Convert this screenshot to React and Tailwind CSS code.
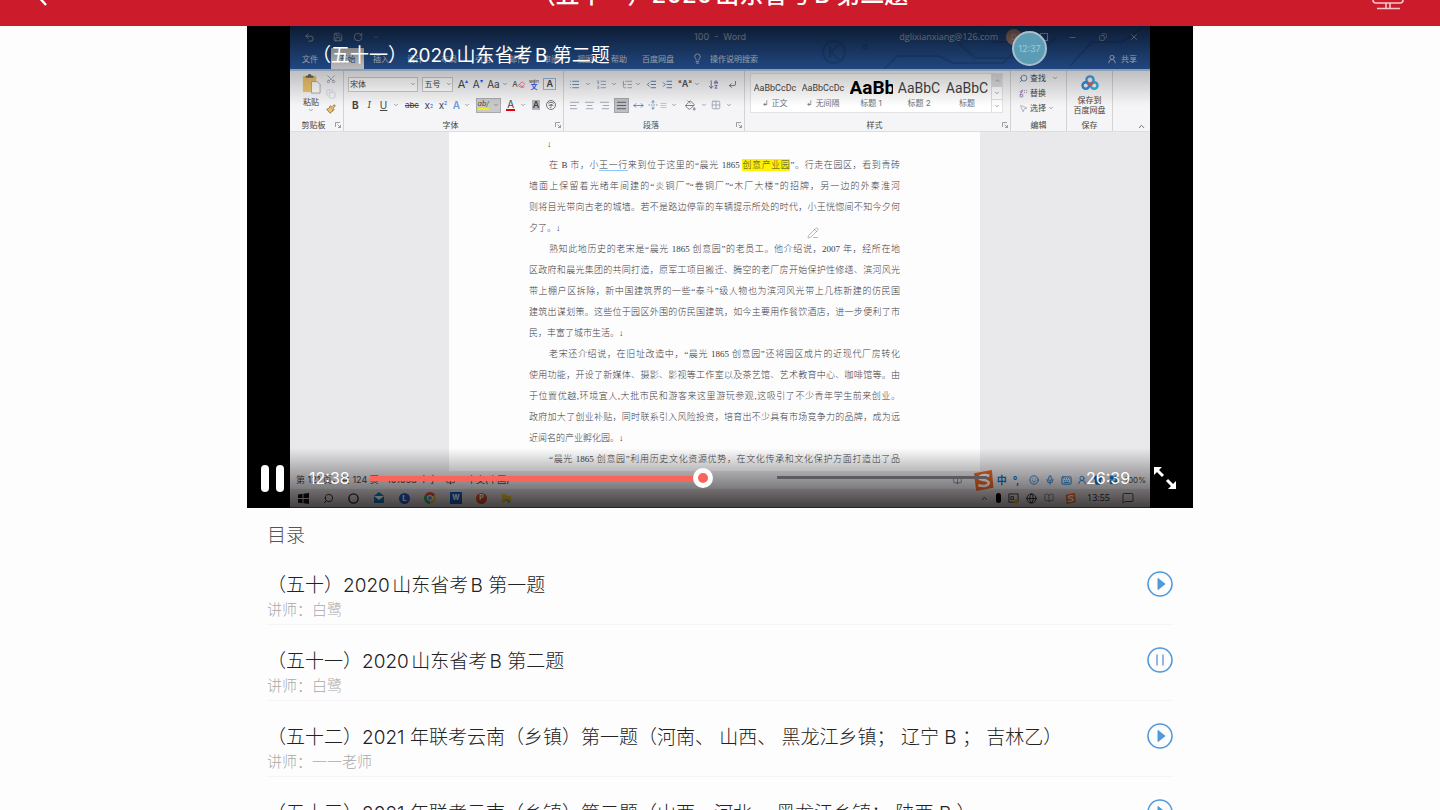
import { useState } from "react";
import {
  Undo2, Save, RotateCw, ChevronDown, ChevronUp, Lightbulb, UserRound, Minus, X, Copy, Scissors,
  Paintbrush, Eraser, List, ListOrdered, ListTree, IndentDecrease, IndentIncrease, ArrowDownAZ,
  CornerDownLeft, AlignLeft, AlignCenter, AlignRight, AlignJustify, PaintBucket, Grid2x2, Search,
  MousePointer2, Replace, Mic, Keyboard, Smile, Shirt, LayoutGrid, Globe, MessageSquare, Circle,
  UnfoldVertical, MoveHorizontal, BookOpen, PencilLine,
} from "lucide-react";

const lessons = [
  { title: "（五十）2020山东省考B 第一题", teacher: "白鹭" },
  { title: "（五十一）2020山东省考B 第二题", teacher: "白鹭" },
  { title: "（五十二）2021 年联考云南（乡镇）第一题（河南、 山西、 黑龙江乡镇； 辽宁 B ； 吉林乙）", teacher: "一一老师" },
  { title: "（五十三）2021 年联考云南（乡镇）第二题（山西、河北、 黑龙江乡镇； 陕西 B ）", teacher: "一一老师" },
];

const tabs = ["插入", "设计", "布局", "引用", "邮件", "审阅", "视图", "帮助"];

const paragraphs = [
  [
    <>在 B 市，小<u className="decoration-blue-300 underline-offset-2">王一行</u>来到位于这里的“晨光 1865 <mark className="bg-[#fff200] text-inherit py-[1px]">创意产业园</mark>”。行走在园区，看到青砖</>,
    "墙面上保留着光绪年间建的“炎铜厂”“卷铜厂”“木厂大楼”的招牌，另一边的外秦淮河",
    "则将目光带向古老的城墙。若不是路边停靠的车辆提示所处的时代，小王恍惚间不知今夕何",
    "夕了。↓",
  ],
  [
    "熟知此地历史的老宋是“晨光 1865 创意园”的老员工。他介绍说，2007 年，经所在地",
    "区政府和晨光集团的共同打造，原军工项目搬迁、腾空的老厂房开始保护性修缮、滨河风光",
    "带上棚户区拆除，新中国建筑界的一些“泰斗”级人物也为滨河风光带上几栋新建的仿民国",
    "建筑出谋划策。这些位于园区外围的仿民国建筑，如今主要用作餐饮酒店，进一步便利了市",
    "民，丰富了城市生活。↓",
  ],
  [
    "老宋还介绍说，在旧址改造中，“晨光 1865 创意园”还将园区成片的近现代厂房转化",
    "使用功能，开设了新媒体、摄影、影视等工作室以及茶艺馆、艺术教育中心、咖啡馆等。由",
    "于位置优越,环境宜人,大批市民和游客来这里游玩参观,这吸引了不少青年学生前来创业。",
    "政府加大了创业补贴，同时联系引入风险投资，培育出不少具有市场竞争力的品牌，成为远",
    "近闻名的产业孵化园。↓",
  ],
];

const styleSamples = [
  { sample: "AaBbCcDc", name: "↲ 正文", cls: "text-[9px]" },
  { sample: "AaBbCcDc", name: "↲ 无间隔", cls: "text-[9px]" },
  { sample: "AaBb", name: "标题 1", cls: "text-[19px] font-bold text-black" },
  { sample: "AaBbC", name: "标题 2", cls: "text-[14px]" },
  { sample: "AaBbC", name: "标题", cls: "text-[14px]" },
];

function Caret() {
  return <ChevronDown className="size-[6px] shrink-0 text-gray-600" />;
}

function Tool({ label, className = "", children }) {
  return (
    <button type="button" aria-label={label} className={`flex h-[15px] shrink-0 items-center justify-center ${className}`}>
      {children}
    </button>
  );
}

function Group({ label, className, launcher = true, children }) {
  return (
    <div className={`flex shrink-0 flex-col border-r border-[#d3d2d5] ${className}`}>
      <div className="min-h-0 flex-1">{children}</div>
      <div className="flex h-3 items-center px-[2px]">
        <span className="flex-1 text-center">{label}</span>
        {launcher && (
          <svg viewBox="0 0 6 6" className="size-[6px]" fill="none" stroke="#888" strokeWidth="0.8">
            <path d="M.5 5V.5H5M2.5 2.5l3 3M5.5 3v2.5H3" />
          </svg>
        )}
      </div>
    </div>
  );
}

function WordHeader() {
  return (
    <div className="relative h-[43px] overflow-hidden bg-[#2a5ba4] text-[8px] text-[#dfe6f1]">
      <svg className="absolute right-0 top-0 h-[43px] w-[400px]" viewBox="0 0 400 43" fill="none" stroke="#22508f" strokeWidth="2">
        <circle cx="84" cy="26" r="11" />
        <path d="M89 19l-8 7 8 8M80 20v12" />
        <circle cx="115" cy="21" r="2" />
        <path d="M134 43l13-13h42l14 7h50l14-14M203 12l22 20h60l20-20M320 40l22-24h30l20-14M230 4l14 12h40" />
      </svg>
      <div className="relative grid h-[22px] grid-cols-[1fr_auto_1fr] items-center">
        <div className="flex items-center gap-[6px] pl-[14px]">
          <Undo2 className="size-[11px]" />
          <Caret />
          <Save className="size-[10px]" />
          <RotateCw className="ml-1 size-[10px]" />
          <ChevronDown className="ml-1 size-[6px]" />
        </div>
        <span className="whitespace-pre text-[9px]">100  -  Word</span>
        <div className="flex items-center justify-end pr-[11px]">
          <span className="mr-2 font-['Open_Sans',sans-serif] text-[9px]">dglixianxiang@126.com</span>
          <span className="mr-[18px] flex size-4 items-center justify-center rounded-full bg-[#d9a398]">D</span>
          <span className="mr-5 size-2 border border-current" />
          <Minus className="mr-[22px] size-[9px]" />
          <Copy className="mr-[22px] size-2 -scale-x-100" />
          <X className="size-[10px]" />
        </div>
      </div>
      <div className="relative flex h-[21px] items-center">
        <span className="w-[41px] pl-3">文件</span>
        <span className="flex h-full w-[33px] items-center justify-center bg-[#f3f2f4] text-[#2a5ba4]">开始</span>
        {tabs.map((tab) => (
          <span key={tab} className="w-[34px] text-center">{tab}</span>
        ))}
        <span className="ml-[6px]">百度网盘</span>
        <Lightbulb className="ml-[18px] size-[11px]" />
        <span className="ml-[7px]">操作说明搜索</span>
        <UserRound className="ml-auto size-[10px]" />
        <span className="ml-1 mr-[13px]">共享</span>
      </div>
    </div>
  );
}

function FontGroup() {
  return (
    <Group label="字体" className="w-[220px]">
      <div className="flex h-[26px] items-center justify-between pl-1 pr-[7px]">
        <label className="relative flex w-[70px] items-center">
          <select aria-label="字体" className="h-[15px] w-full appearance-none border border-[#c9c8cb] bg-white px-[1px] text-[8px]">
            <option>宋体</option>
          </select>
          <span className="absolute right-[2px]"><Caret /></span>
        </label>
        <label className="relative flex w-[31px] items-center">
          <select aria-label="字号" className="h-[15px] w-full appearance-none border border-[#c9c8cb] bg-white px-[1px] text-[8px]">
            <option>五号</option>
          </select>
          <span className="absolute right-[1px]"><Caret /></span>
        </label>
        <Tool label="增大字号"><span className="text-[11px]">A</span><sup className="text-[6px] text-blue-600">▴</sup></Tool>
        <Tool label="减小字号"><span className="text-[10px]">A</span><sup className="text-[6px] text-blue-600">▾</sup></Tool>
        <Tool label="更改大小写" className="gap-[2px] text-[10px]">Aa<Caret /></Tool>
        <Tool label="清除格式">
          <span className="text-[8px]">A</span><Eraser className="size-[7px] text-rose-500" />
        </Tool>
        <Tool label="拼音指南">
          <span className="flex flex-col text-[7px] leading-[6px]"><i className="text-[5px] not-italic">wén</i><b className="text-blue-600">文</b></span>
        </Tool>
        <Tool label="字符边框"><span className="border border-[#9cb7d4] px-[2px] text-[9px] font-semibold leading-[10px]">A</span></Tool>
      </div>
      <div className="flex h-[16px] items-center justify-between pl-2 pr-[7px] text-[10px]">
        <Tool label="加粗" className="font-bold">B</Tool>
        <Tool label="倾斜" className="w-[10px] font-serif italic">I</Tool>
        <Tool label="下划线" className="gap-[6px]"><span className="underline">U</span><Caret /></Tool>
        <Tool label="删除线" className="text-[8px] line-through">abc</Tool>
        <Tool label="下标">x<sub className="text-[5px] text-blue-600">2</sub></Tool>
        <Tool label="上标">x<sup className="text-[5px] text-blue-600">2</sup></Tool>
        <Tool label="文本效果" className="gap-1 font-semibold text-[#6ea0d8]">A<Caret /></Tool>
        <Tool label="突出显示" className="w-[25px] gap-1 border border-[#a9a8ab] bg-[#c9c8ca]">
          <span className="border-b-2 border-[#f2ee1a] text-[7px] italic leading-[8px]">ab/</span><Caret />
        </Tool>
        <Tool label="字体颜色" className="gap-[5px]"><span className="border-b-2 border-red-600 px-[1px] leading-[9px]">A</span><Caret /></Tool>
        <Tool label="字符底纹"><span className="bg-[#b5b4b7] px-[1px] text-[9px] font-semibold leading-[10px]">A</span></Tool>
        <Tool label="带圈字符"><span className="flex size-[10px] items-center justify-center rounded-full border border-gray-500 text-[6px]">字</span></Tool>
      </div>
    </Group>
  );
}

function ParagraphGroup() {
  return (
    <Group label="段落" className="w-[181px] text-gray-600">
      <div className="flex h-[26px] items-center gap-[5px] pl-[5px]">
        <Tool label="项目符号" className="gap-[5px]"><List className="size-[11px] text-[#5f84b4]" /><Caret /></Tool>
        <Tool label="编号" className="gap-[4px]"><ListOrdered className="size-[11px] text-[#8aa0bf]" /><Caret /></Tool>
        <Tool label="多级列表" className="gap-[2px]"><ListTree className="size-[11px] text-gray-400" /><Caret /></Tool>
        <Tool label="减少缩进"><IndentDecrease className="size-[11px] text-[#4f78ab]" /></Tool>
        <Tool label="增加缩进"><IndentIncrease className="size-[11px] text-[#4f78ab]" /></Tool>
        <Tool label="中文版式" className="gap-[2px]"><span className="text-[9px] font-semibold">ˣAˣ</span><Caret /></Tool>
        <Tool label="排序" className="ml-[3px]"><ArrowDownAZ className="size-[11px] text-[#7165a8]" /></Tool>
        <Tool label="显示编辑标记" className="ml-1"><CornerDownLeft className="size-[9px]" /></Tool>
      </div>
      <div className="flex h-[16px] items-center gap-1 pl-[5px]">
        <Tool label="左对齐"><AlignLeft className="size-[11px] text-gray-400" /></Tool>
        <Tool label="居中"><AlignCenter className="size-[11px] text-gray-400" /></Tool>
        <Tool label="右对齐"><AlignRight className="size-[11px] text-gray-400" /></Tool>
        <Tool label="两端对齐" className="w-[15px] border border-[#a5a4a7] bg-[#bfbec1]"><AlignJustify className="size-[11px]" /></Tool>
        <Tool label="分散对齐"><MoveHorizontal className="size-[11px] text-[#4f8ac4]" /></Tool>
        <Tool label="行距" className="gap-[2px]"><UnfoldVertical className="size-[10px] text-[#4f8ac4]" /><AlignJustify className="size-[7px] text-gray-400" /></Tool>
        <Caret />
        <Tool label="底纹" className="ml-1 gap-[5px]"><PaintBucket className="size-[11px] text-gray-500" /><Caret /></Tool>
        <Tool label="边框" className="gap-[5px]"><Grid2x2 className="size-[10px] text-gray-400" /><Caret /></Tool>
      </div>
    </Group>
  );
}

function Ribbon() {
  return (
    <div className="flex h-[63px] overflow-hidden border-b border-t-2 border-b-[#dddcdf] border-t-[#b9cdea] bg-[#f5f4f6] text-[8px] leading-[10px] text-[#444]">
      <Group label="剪贴板" className="w-[54px]">
        <div className="flex justify-between pl-[11px] pr-[7px] pt-[2px]">
          <button type="button" className="flex w-5 flex-col items-center">
            <svg viewBox="0 0 20 22" className="size-[21px]">
              <rect x="1" y="3" width="14" height="17" fill="#efc36c" />
              <path d="M4 5V3h2a2 2 0 0 1 4 0h2v2z" fill="#666" />
              <path d="M10 9h6l3 3v9h-9z" fill="#fff" stroke="#aaa" />
            </svg>
            <span className="mt-1 whitespace-nowrap leading-[9px]">粘贴</span>
            <Caret />
          </button>
          <div className="flex flex-col gap-[5px] pt-[1px]">
            <Scissors className="size-[10px] -rotate-90 text-gray-400" />
            <Copy className="size-[10px] text-gray-300" />
            <Paintbrush className="size-[10px] fill-[#efc36c] text-[#8a6d3d]" />
          </div>
        </div>
      </Group>
      <FontGroup />
      <ParagraphGroup />
      <Group label="样式" className="w-[266px]">
        <div className="ml-[5px] mr-[7px] mt-[2px] flex h-10 border border-[#e2e1e4] bg-white">
          {styleSamples.map((style, i) => (
            <button type="button" key={i} className="flex w-12 shrink-0 flex-col items-center pt-[3px]">
              <span className={`h-[21px] w-[43px] overflow-hidden whitespace-nowrap font-[Roboto,sans-serif] leading-[22px] ${style.cls}`}>{style.sample}</span>
              <span className="whitespace-nowrap text-gray-500">{style.name}</span>
            </button>
          ))}
          <div className="flex flex-1 flex-col divide-y divide-[#dddce0] border-l border-[#dddce0]">
            <span className="flex flex-1 items-center justify-center bg-[#dcdbde]"><ChevronUp className="size-[5px]" /></span>
            <span className="flex flex-1 items-center justify-center"><Caret /></span>
            <span className="flex flex-1 items-center justify-center"><Caret /></span>
          </div>
        </div>
      </Group>
      <Group label="编辑" className="w-[56px]" launcher={false}>
        <div className="flex flex-col gap-[5px] pl-2 pt-[2px]">
          <button type="button" className="flex items-center gap-[2px]"><Search className="size-[9px] -scale-x-100 text-[#3d6ea8]" />查找<span className="ml-1"><Caret /></span></button>
          <button type="button" className="flex items-center gap-[2px]"><Replace className="size-[9px] text-[#8064a2]" />替换</button>
          <button type="button" className="flex items-center gap-[2px]"><MousePointer2 className="size-[9px] text-gray-400" />选择<Caret /></button>
        </div>
      </Group>
      <Group label="保存" className="w-[46px]" launcher={false}>
        <button type="button" className="flex w-full flex-col items-center whitespace-nowrap pt-1">
          <svg viewBox="0 0 18 15" className="mb-[5px] h-[15px] w-[18px]" fill="none" strokeWidth="2.4">
            <circle cx="9" cy="5" r="3.6" stroke="#3aa7e0" />
            <circle cx="4.8" cy="10.5" r="3.3" stroke="#2f8fe0" />
            <circle cx="13.2" cy="10.5" r="3.3" stroke="#35b2dd" />
            <path d="M6 7.5l3 2.5 3-2.5" stroke="#e85a5e" />
          </svg>
          <span>保存到</span>
          <span>百度网盘</span>
        </button>
      </Group>
      <ChevronUp className="ml-auto mr-1 size-[9px] self-end" />
    </div>
  );
}

function Document() {
  return (
    <div className="bg-[#e9e8eb]">
      <div className="ml-[159px] mr-[170px] bg-[#fefdfe] px-[80px] pb-[1px] pt-[2px] font-['Liberation_Serif','Noto_Sans_CJK_SC',serif] text-[9px] font-light leading-[21px] text-[#3c3c3e]">
        <p className="pl-[18px]">↓</p>
        {paragraphs.map((lines, i) => (
          <div key={i}>
            {lines.map((line, j) => (
              <p key={j} className={`whitespace-nowrap ${j === 0 ? "pl-5" : ""} ${j < lines.length - 1 ? "[text-align-last:justify]" : ""}`}>
                {line}
              </p>
            ))}
          </div>
        ))}
        <p className="whitespace-nowrap pl-5 [text-align-last:justify]">
          “晨光 1865 创意园”利用历史文化资源优势，在文化传承和文化保护方面打造出了品
        </p>
      </div>
    </div>
  );
}

function SogouLogo({ className }) {
  return (
    <svg viewBox="0 0 20 20" className={className}>
      <path d="M1 3L18 0l1.500 17L3 20z" fill="#f26722" />
      <path d="M15.500 5.500C10 4 5.500 5.500 6 8c.5 2 8.500 1 9 4 .3 3-5 4-10 2.500" fill="none" stroke="#fff" strokeWidth="2.400" />
    </svg>
  );
}

function StatusBar() {
  return (
    <div className="flex h-[18px] items-center whitespace-nowrap bg-[#eceaed] pl-[6px] text-[9px] text-[#444]">
      <span className="w-[91px]">第 121 页，共 124 页</span>
      <span className="w-[59px]">101093 个字</span>
      <BookOpen className="mr-3 size-[9px]" />
      <span>中文(中国)</span>
      <BookOpen className="ml-auto mr-[11px] size-[9px] text-gray-500" />
      <div className="grid grid-cols-[24px_repeat(8,16px)] items-center text-[#0d74d1]">
        <SogouLogo className="size-[21px]" />
        <b className="text-[10px]">中</b>
        <b className="text-[10px]">°,</b>
        <Smile className="size-[10px]" />
        <Mic className="size-[10px]" />
        <Keyboard className="size-[11px]" />
        <UserRound className="size-[10px]" />
        <Shirt className="size-[10px] fill-current" />
        <LayoutGrid className="size-[10px] fill-current" />
      </div>
      <span className="mr-1 text-[8px]">100%</span>
    </div>
  );
}

function Taskbar() {
  return (
    <div className="flex h-[19px] items-center border-b border-[#777] bg-[#dcd2d7] pl-2 text-[9px] text-[#222]">
      <div className="flex items-center gap-[14px]">
        <svg viewBox="0 0 12 12" className="size-[11px]"><path d="M0 1.500l5-.7v4.700H0zM6 .7L12 0v5.500H6zM0 6.500h5v4.700l-5-.7zM6 6.500h6V12l-6-.8z" fill="#111" /></svg>
        <Search className="size-[11px] -scale-x-100" />
        <Circle className="size-[11px]" strokeWidth={3} />
        <svg viewBox="0 0 12 12" className="size-3"><path d="M1 4l5-4 5 4v7H1z" fill="#1279b8" /><path d="M1 4h10L6 8z" fill="#fff" /></svg>
        <span className="flex size-[11px] items-center justify-center rounded-full bg-[#2557c7] text-[8px] font-bold text-white">L</span>
        <svg viewBox="0 0 12 12" className="size-3">
          <path d="M6 6L.8 3A6 6 0 0 1 11.200 3z" fill="#e14a41" />
          <path d="M6 6l5.200-3A6 6 0 0 1 6 12z" fill="#edc22e" />
          <path d="M6 6v6A6 6 0 0 1 .8 3z" fill="#3aa757" />
          <circle cx="6" cy="6" r="2.500" fill="#5b8dee" stroke="#fff" />
        </svg>
        <span className="flex size-3 items-center justify-center bg-[#185abd] text-[7px] font-bold text-white">W</span>
        <span className="flex size-[11px] items-center justify-center rounded-full bg-[#d14b27] text-[7px] font-bold text-white">P</span>
        <svg viewBox="0 0 12 12" className="size-[11px]"><path d="M1 1h4l1 2h5v8H8V8H4v3H1z" fill="#e7b936" /><path d="M4 8h4v3" fill="none" stroke="#2583c7" /></svg>
      </div>
      <div className="ml-auto flex items-center gap-[7px]">
        <ChevronUp className="size-[9px]" />
        <span className="h-[10px] w-[5px] rounded-sm bg-black" />
        <svg viewBox="0 0 12 12" className="size-[11px]"><path d="M1 1h10v9H1zM3 4h3v3H3z" fill="none" stroke="#333" /><circle cx="9" cy="9" r="2.500" fill="#e8a91c" /></svg>
        <Globe className="size-[11px]" />
        <BookOpen className="size-[10px] text-gray-500" />
        <SogouLogo className="ml-1 size-[11px]" />
        <span className="ml-1 font-['Open_Sans',sans-serif]">13:55</span>
        <MessageSquare className="ml-[5px] mr-4 size-3" strokeWidth={1.5} />
      </div>
    </div>
  );
}

function Player() {
  const duration = 1599;
  const [time, setTime] = useState(758);
  const played = (time / duration) * 100;
  const track = `linear-gradient(to right, #f9645b ${played}%, transparent ${played}%)`;

  return (
    <section aria-label="视频" className="relative bg-black px-[43px]">
      <WordHeader />
      <Ribbon />
      <Document />
      <StatusBar />
      <Taskbar />

      <PencilLine className="absolute left-[560px] top-[201px] size-3 text-gray-500" strokeWidth={1} />

      <div className="absolute inset-x-0 top-0 h-20 bg-gradient-to-b from-black/70 via-black/25 to-transparent">
        <h2 className="pl-[65px] pt-4 text-[19px] leading-7 text-white">（五十一）2020山东省考B 第二题</h2>
      </div>
      <span className="absolute right-[146px] top-[5px] flex size-[35px] items-center justify-center rounded-full border-2 border-[#a9bfce] bg-[#5c9db5] text-[9px] text-[#9ccbd8]">
        12:37
      </span>

      <div className="absolute inset-x-0 bottom-0 flex h-[60px] items-center bg-gradient-to-b from-transparent via-black/35 to-black/70 pl-[13px] pr-4 text-[16px] text-white">
        <button type="button" aria-label="暂停" className="flex w-[25px] justify-between px-[1px]">
          <span className="h-[27px] w-2 rounded-full bg-white" />
          <span className="h-[27px] w-2 rounded-full bg-white" />
        </button>
        <span className="ml-6 w-11">12:38</span>
        <div className="relative ml-[17px] mr-[15px] flex min-w-0 flex-1 items-center">
          <span className="absolute left-[58%] right-[12%] top-0 h-[3px] bg-[#5d5a60]" />
          <input
            type="range"
            aria-label="播放进度"
            min="0"
            max={duration}
            value={time}
            onChange={(e) => setTime(Number(e.target.value))}
            style={{ backgroundImage: track }}
            className="relative h-[5px] w-full appearance-none [&::-webkit-slider-thumb]:size-5 [&::-webkit-slider-thumb]:appearance-none [&::-webkit-slider-thumb]:rounded-full [&::-webkit-slider-thumb]:border-[5px] [&::-webkit-slider-thumb]:border-white [&::-webkit-slider-thumb]:bg-[#f9645b]"
          />
        </div>
        <span className="w-11">26:39</span>
        <button type="button" aria-label="全屏" className="ml-[23px]">
          <svg viewBox="0 0 24 24" className="size-6" fill="none" stroke="#fff" strokeWidth="3">
            <path d="M3 3l7 7M14 14l7 7" />
            <path d="M1 1h8L1 9zM23 23h-8l8-8z" fill="#fff" stroke="none" />
          </svg>
        </button>
      </div>
    </section>
  );
}

function LessonIcon({ playing }) {
  return (
    <svg viewBox="0 0 26 26" className="size-[26px]" fill="none" stroke="#5199dd" strokeWidth="1.6">
      <circle cx="13" cy="13" r="12" />
      {playing ? <path d="M10 7.500v11M16 7.500v11" stroke="#7ea3d6" /> : <path d="M11 7.500v11l7-5.500z" fill="#5199dd" strokeWidth="1" />}
    </svg>
  );
}

export default function App() {
  const [current, setCurrent] = useState(1);

  return (
    <div className="flex h-screen flex-col overflow-hidden bg-[#fefdfe] font-[Inter,'Noto_Sans_CJK_SC',sans-serif] [text-autospace:normal]">
      <header className="flex h-[26px] shrink-0 items-end justify-between overflow-hidden bg-[#cc1b2b] px-9 text-white">
        <button type="button" aria-label="返回" className="w-8 pb-5">
          <svg viewBox="0 0 12 22" className="h-[22px] w-3" fill="none" stroke="currentColor" strokeWidth="2.4">
            <path d="M10 1L1 11l9 10" />
          </svg>
        </button>
        <h1 className="whitespace-nowrap pb-[15px] text-[24px] font-medium leading-8">（五十一）2020山东省考B 第二题</h1>
        <button type="button" aria-label="投屏" className="pb-4">
          <svg viewBox="0 0 32 28" className="h-7 w-8" fill="none" stroke="#f3c8cc" strokeWidth="1.6">
            <rect x="1" y="1" width="30" height="20" rx="3" />
            <path d="M14 21v5M18 21v5M5 26.500h23" />
          </svg>
        </button>
      </header>

      <main className="mx-auto w-full max-w-[946px]">
        <Player />
        <section className="px-5">
          <h2 className="pt-[14px] text-[19px] font-light leading-7 text-[#555]">目录</h2>
          <ul>
            {lessons.map((lesson, i) => (
              <li key={lesson.title} className="flex items-start justify-between border-b border-[#f7f5f7] pb-1 pt-[21px] first:pt-[20px]">
                <div className="pt-[2px]">
                  <h3 className="whitespace-nowrap text-[19px] font-light leading-7 text-[#222]">{lesson.title}</h3>
                  <p className="text-[15px] font-light leading-5 text-[#aaa]">讲师：{lesson.teacher}</p>
                </div>
                <button type="button" aria-label={i === current ? "暂停" : "播放"} onClick={() => setCurrent(i)} className="pt-[1px]">
                  <LessonIcon playing={i === current} />
                </button>
              </li>
            ))}
          </ul>
        </section>
      </main>
    </div>
  );
}
